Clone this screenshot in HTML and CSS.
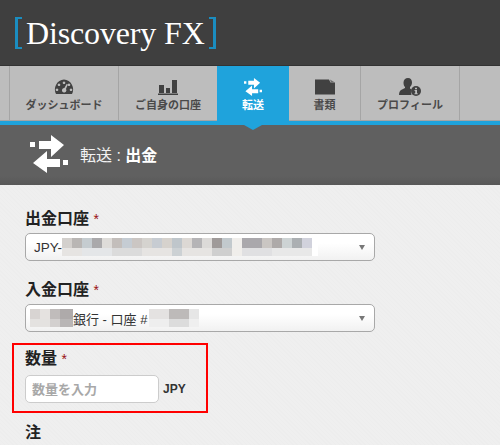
FILE: index.html
```html
<!DOCTYPE html>
<html lang="ja">
<head>
<meta charset="utf-8">
<title>Discovery FX</title>
<link rel="stylesheet" href="styles.css">
</head>
<body>
<header class="brand">
  <span class="bracket bracket-left"></span><span class="logo">Discovery FX</span><span class="bracket bracket-right"></span>
</header>
<nav class="tabs">
  <a class="tab tab-lead"></a>
  <a class="tab tab-dash">
    <svg class="icon" width="20" height="15" viewBox="0 0 20 15"><path fill-rule="evenodd" d="M10 0a10 10 0 0 1 8 14.6H2A10 10 0 0 1 10 0zM10 2a1.300 1.300 0 1 0 .01 0zM5 4a1.300 1.300 0 1 0 .01 0zM15 4a1.300 1.300 0 1 0 .01 0zM3 9a1.300 1.300 0 1 0 .01 0zM17 9a1.300 1.300 0 1 0 .01 0zM12.600 4.500 10.400 8.600a2.200 2.200 0 1 0 1.500.8l2-4.300z"/></svg>
    <span>ダッシュボード</span>
  </a>
  <a class="tab tab-acct">
    <svg class="icon" width="20" height="16" viewBox="0 0 20 16"><path d="M0 14.500h20V16H0zM1 6h5v8H1zM8 9h4v5H8zM14 1h5v13h-5z"/></svg>
    <span>ご自身の口座</span>
  </a>
  <a class="tab tab-active">
    <svg class="icon" width="20" height="18" viewBox="0 0 38 38"><use href="#swap"/></svg>
    <span>転送</span>
  </a>
  <a class="tab tab-docs">
    <svg class="icon" width="20" height="15" viewBox="0 0 20 15"><path d="M0 0h14l1.500 3H20v12H0z"/><path class="fold" d="M15 0l5 3h-4z"/></svg>
    <span>書類</span>
  </a>
  <a class="tab tab-prof">
    <svg class="icon" width="22" height="18" viewBox="0 0 22 18"><path d="M9 0c2.600 0 4 2 4 4.500 0 2-1 3.700-2 4.500v1.500l1.500 1a6 6 0 0 0 0 5.500H0c0-3 1-4.500 3-5.500l3-1.500V9C5 8.200 4.500 6.500 4.500 4.500 4.500 2 6.400 0 9 0z"/><circle cx="17" cy="13" r="5"/><path class="info" d="M16 9.700h2v1.600h-2zM15.500 12h2.500v3.200h.7v1h-3.200v-1h.7V13h-.7z"/></svg>
    <span>プロフィール</span>
  </a>
  <a class="tab tab-rest"></a>
</nav>
<div class="rule"><span class="pointer"></span></div>
<section class="title-band">
  <svg class="title-icon" width="38" height="38" viewBox="0 0 38 38"><use href="#swap"/></svg>
  <h1 class="title">転送 : <b>出金</b></h1>
</section>
<main class="content">
  <div class="field">
    <label class="label">出金口座 <i>*</i></label>
    <div class="select"><span>JPY-</span><span class="mosaic mosaic-a"></span><span class="caret"></span></div>
  </div>
  <div class="field">
    <label class="label">入金口座 <i>*</i></label>
    <div class="select select-b"><span class="mosaic mosaic-b"></span><span>銀行 - 口座 #</span><span class="mosaic mosaic-c"></span><span class="caret"></span></div>
  </div>
  <div class="highlight">
    <label class="label label-tall">数量 <i>*</i></label>
    <div class="amount">
      <input class="input" type="text" placeholder="数量を入力">
      <span class="unit">JPY</span>
    </div>
  </div>
  <label class="label note">注</label>
</main>
<svg class="defs" width="0" height="0">
  <defs>
    <g id="swap" fill="#fff">
      <path d="M0 7h5v5H0zM9 6h12V0l13 10-13 12v-8H9z"/>
      <path d="M38 25h-5v5h5zM30 24H17v-8L3 28l14 10v-6h13z"/>
    </g>
  </defs>
</svg>
</body>
</html>
```
FILE: styles.css
```css
* { box-sizing: border-box; }
html, body { margin: 0; padding: 0; }
body {
  width: 500px;
  height: 445px;
  overflow: hidden;
  background: #eee;
  font-family: "Liberation Sans", "Noto Sans CJK JP", sans-serif;
  color: #222;
}
.brand {
  height: 66px;
  background: #3f3f3f;
  border-bottom: 1px solid #333;
  display: flex;
  align-items: center;
  padding: 0 0 0 15px;
}
.logo {
  font-family: "Liberation Serif", serif;
  font-size: 32px;
  line-height: 40px;
  color: #fff;
  padding: 0 4px 0 4px;
  letter-spacing: -0.15px;
  white-space: nowrap;
}
.bracket {
  width: 7px;
  height: 32px;
  border: 2px solid #1b8dc0;
  display: block;
  flex: none;
}
.bracket-left { border-right: 0; border-left-width: 3px; }
.bracket-right { border-left: 0; border-right-width: 3px; }
.tabs {
  height: 55px;
  display: flex;
  background: #bdbdbd;
  border-bottom: 1px solid #a5a5a5;
}
.tab {
  display: flex;
  flex-direction: column;
  align-items: center;
  height: 54px;
  padding-top: 12px;
  border-right: 1px solid #a5a5a5;
  font-size: 11px;
  font-weight: 700;
  line-height: 15px;
  color: #4a4a4a;
  white-space: nowrap;
}
.icon { fill: #414141; display: block; height: 18px; margin-bottom: 2px; }
.icon .fold { fill: #6b6b6b; }
.icon .info { fill: #bdbdbd; }
.tab-lead { width: 10px; padding: 0; }
.tab-dash { width: 109px; }
.tab-acct { width: 98px; border-right: 0; }
.tab-active { width: 72px; height: 55px; background: #1fa3dc; color: #fff; border-right: 0; }
.tab-docs { width: 72px; }
.tab-prof { width: 99px; }
.tab-rest { flex: 1; border-right: 0; padding: 0; }
.rule {
  height: 4px;
  background: #1fa3dc;
  position: relative;
}
.pointer {
  position: absolute;
  left: 244px;
  top: 4px;
  width: 0;
  height: 0;
  border-left: 9px solid transparent;
  border-right: 9px solid transparent;
  border-top: 5px solid #1fa3dc;
}
.title-band {
  height: 60px;
  background: linear-gradient(#606060, #606060 85%, #585858);
  display: flex;
  align-items: center;
  gap: 12px;
  padding: 0 0 2px 30px;
}
.title {
  margin: 0;
  font-size: 16px;
  font-weight: 400;
  color: #f2f2f2;
}
.title b { color: #fff; font-weight: 700; }
.content {
  padding: 24px 25px 0;
  background-color: #eee;
  background-image: repeating-linear-gradient(45deg, #ededed 0 1px, #efefef 1px 3px);
  height: 260px;
}
.field { height: 71px; }
.label {
  display: block;
  height: 24px;
  font-size: 16px;
  line-height: 20px;
  font-weight: 700;
  color: #222;
}
.label-tall { height: 26px; }
.label i { color: #911; font-style: normal; font-weight: 400; font-size: 14px; }
.select {
  width: 350px;
  height: 28px;
  border: 1px solid #a8a8a8;
  border-radius: 5px;
  background: linear-gradient(#fff 35%, #f1f1f1);
  display: flex;
  align-items: center;
  padding-left: 8px;
  font-size: 13.500px;
  color: #333;
}
.select-b { padding-left: 4px; font-size: 13px; }
.mosaic { display: block; height: 18px; flex: none; }
.mosaic-a {
  width: 256px;
  background:
    linear-gradient(90deg,
      #d3d0cd 0 10px, #b9b6b4 10px 20px, #c5ccd0 20px 30px, #aaa9ab 30px 40px, #dedcd9 40px 50px, #c3bebb 50px 60px,
      #c5ccd3 60px 70px, #cbc6c3 70px 80px, #d5d3cf 80px 90px, #c7ccd2 90px 100px, #d6d2cd 100px 110px, #bfc6cb 110px 120px,
      #dcd8d4 120px 130px, #b5b4b6 130px 140px, #dcdad8 140px 150px, #9f9a99 150px 160px, #c2c9cd 160px 170px, #f0eeeb 170px 180px,
      #aaa8ac 180px 200px, #cac6c3 200px 210px, #aeaaa9 210px 220px, #cdd3d4 220px 230px, #abafb2 230px 240px, #d1d2dc 240px 250px, #fff 250px) top / 100% 10px no-repeat,
    linear-gradient(90deg,
      #e6e4e2 0 20px, #e4e6e8 20px 50px, #dbdbdb 50px 80px, #e6e4e2 80px 110px, #ccd1d4 110px 120px, #e6e4e2 120px 150px, #cfcfcf 150px 170px, #f0eeeb 170px 180px, #e0e0e2 180px 210px, #e8e8e8 210px 250px, #fff 250px) bottom / 100% 8px no-repeat;
}
.mosaic-b {
  width: 43px;
  background:
    linear-gradient(90deg, #d8d4d2 0 10px, #e5e2e0 10px 20px, #c0bcbb 20px 30px, #aeaaaa 30px 43px) top / 100% 10px no-repeat,
    linear-gradient(90deg, #e4e2e0 0 20px, #d3d0cf 20px 30px, #b9b6b6 30px 43px) bottom / 100% 8px no-repeat;
}
.mosaic-c {
  width: 50px;
  margin-left: 2px;
  background:
    linear-gradient(90deg, #e4e2e1 0 20px, #bdbab9 20px 40px, #e6e6e6 40px 50px) top / 100% 10px no-repeat,
    linear-gradient(90deg, #eeeeee 0 20px, #dcdcdc 20px 40px, #efefef 40px 50px) bottom / 100% 8px no-repeat;
}
.caret {
  margin-left: auto;
  margin-right: 9px;
  width: 0;
  height: 0;
  border-left: 3.500px solid transparent;
  border-right: 3.500px solid transparent;
  border-top: 5px solid #777;
}
.highlight {
  width: 196px;
  height: 70px;
  margin: -8px 0 0 -13px;
  padding: 4px 0 0 11px;
  border: 2px solid #f00;
}
.amount { display: flex; align-items: center; gap: 4px; }
.input {
  width: 134px;
  height: 28px;
  border: 1px solid #ccc;
  border-radius: 5px;
  background: #fff;
  padding: 0 6px;
  font: 13px "Liberation Sans", "Noto Sans CJK JP", sans-serif;
}
.input::placeholder { color: #a8a8a8; font-weight: 700; opacity: 1; }
.unit { font-size: 12px; font-weight: 700; color: #333; }
.note { margin-top: 10px; }
.defs { position: absolute; }
```
